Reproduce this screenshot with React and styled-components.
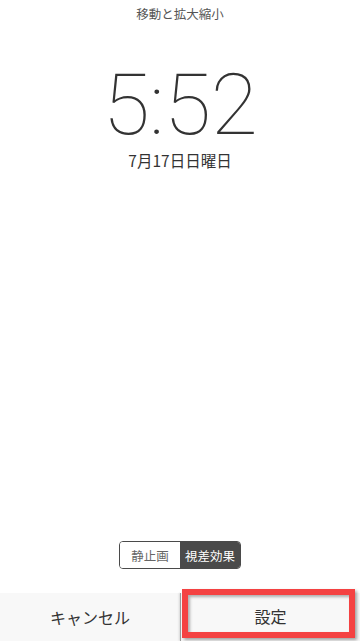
import React from 'react'
import styled, { createGlobalStyle } from 'styled-components'

const Global = createGlobalStyle`
  html, body { margin: 0; padding: 0; background: #fff; }
  body { font-family: "Noto Sans CJK JP", "Liberation Sans", sans-serif; }
`

const Screen = styled.div`
  width: 360px;
  height: 641px;
  display: flex;
  flex-direction: column;
  background: #fff;
  overflow: hidden;
`

const Title = styled.div`
  margin-top: 5px;
  text-align: center;
  font-size: 12.5px;
  line-height: 18px;
  color: #555;
`

const Clock = styled.div`
  margin-top: 46px;
  display: flex;
  flex-direction: column;
  align-items: center;
`

const Time = styled.div`
  font-family: Roboto, "Liberation Sans", sans-serif;
  font-weight: 100;
  font-size: 86px;
  line-height: 72px;
  color: #333;
  letter-spacing: -0.5px;
`

const DateText = styled.div`
  margin-top: 9px;
  font-size: 15.5px;
  line-height: 20px;
  color: #333;
`

const Spacer = styled.div`
  flex: 1;
`

const Segmented = styled.div`
  align-self: center;
  display: flex;
  margin-bottom: 24px;
  border: 1px solid #4a4a4a;
  border-radius: 4px;
  overflow: hidden;
`

const Segment = styled.div`
  width: 60px;
  height: 26px;
  display: flex;
  align-items: center;
  justify-content: center;
  font-size: 12.5px;
  color: ${p => (p.$active ? '#fff' : '#666')};
  background: ${p => (p.$active ? '#4a4a4a' : '#fff')};
`

const Bar = styled.div`
  height: 48px;
  display: grid;
  grid-template-columns: 180px 1px 1fr;
  background: #f8f8f8;
`

const Divider = styled.div`
  background: #9a9a9a;
  box-shadow: -1px 0 2px rgba(0, 0, 0, 0.2);
`

const BarButton = styled.div`
  position: relative;
  display: flex;
  align-items: center;
  justify-content: center;
  font-size: 16px;
  color: #333;
  padding-bottom: ${p => (p.$shift ? '2px' : '0')};
`

const Highlight = styled.div`
  position: absolute;
  left: 1px;
  right: 5px;
  top: -4px;
  bottom: 3px;
  border: 6px solid #f44242;
  box-shadow: 2px 2px 3px rgba(0, 0, 0, 0.35), inset 2px 2px 3px rgba(0, 0, 0, 0.3);
  pointer-events: none;
`

export default function App() {
  return (
    <Screen>
      <Global />
      <Title>移動と拡大縮小</Title>
      <Clock>
        <Time>5:52</Time>
        <DateText>7月17日日曜日</DateText>
      </Clock>
      <Spacer />
      <Segmented>
        <Segment>静止画</Segment>
        <Segment $active>視差効果</Segment>
      </Segmented>
      <Bar>
        <BarButton>キャンセル</BarButton>
        <Divider />
        <BarButton $shift>
          設定
          <Highlight />
        </BarButton>
      </Bar>
    </Screen>
  )
}
